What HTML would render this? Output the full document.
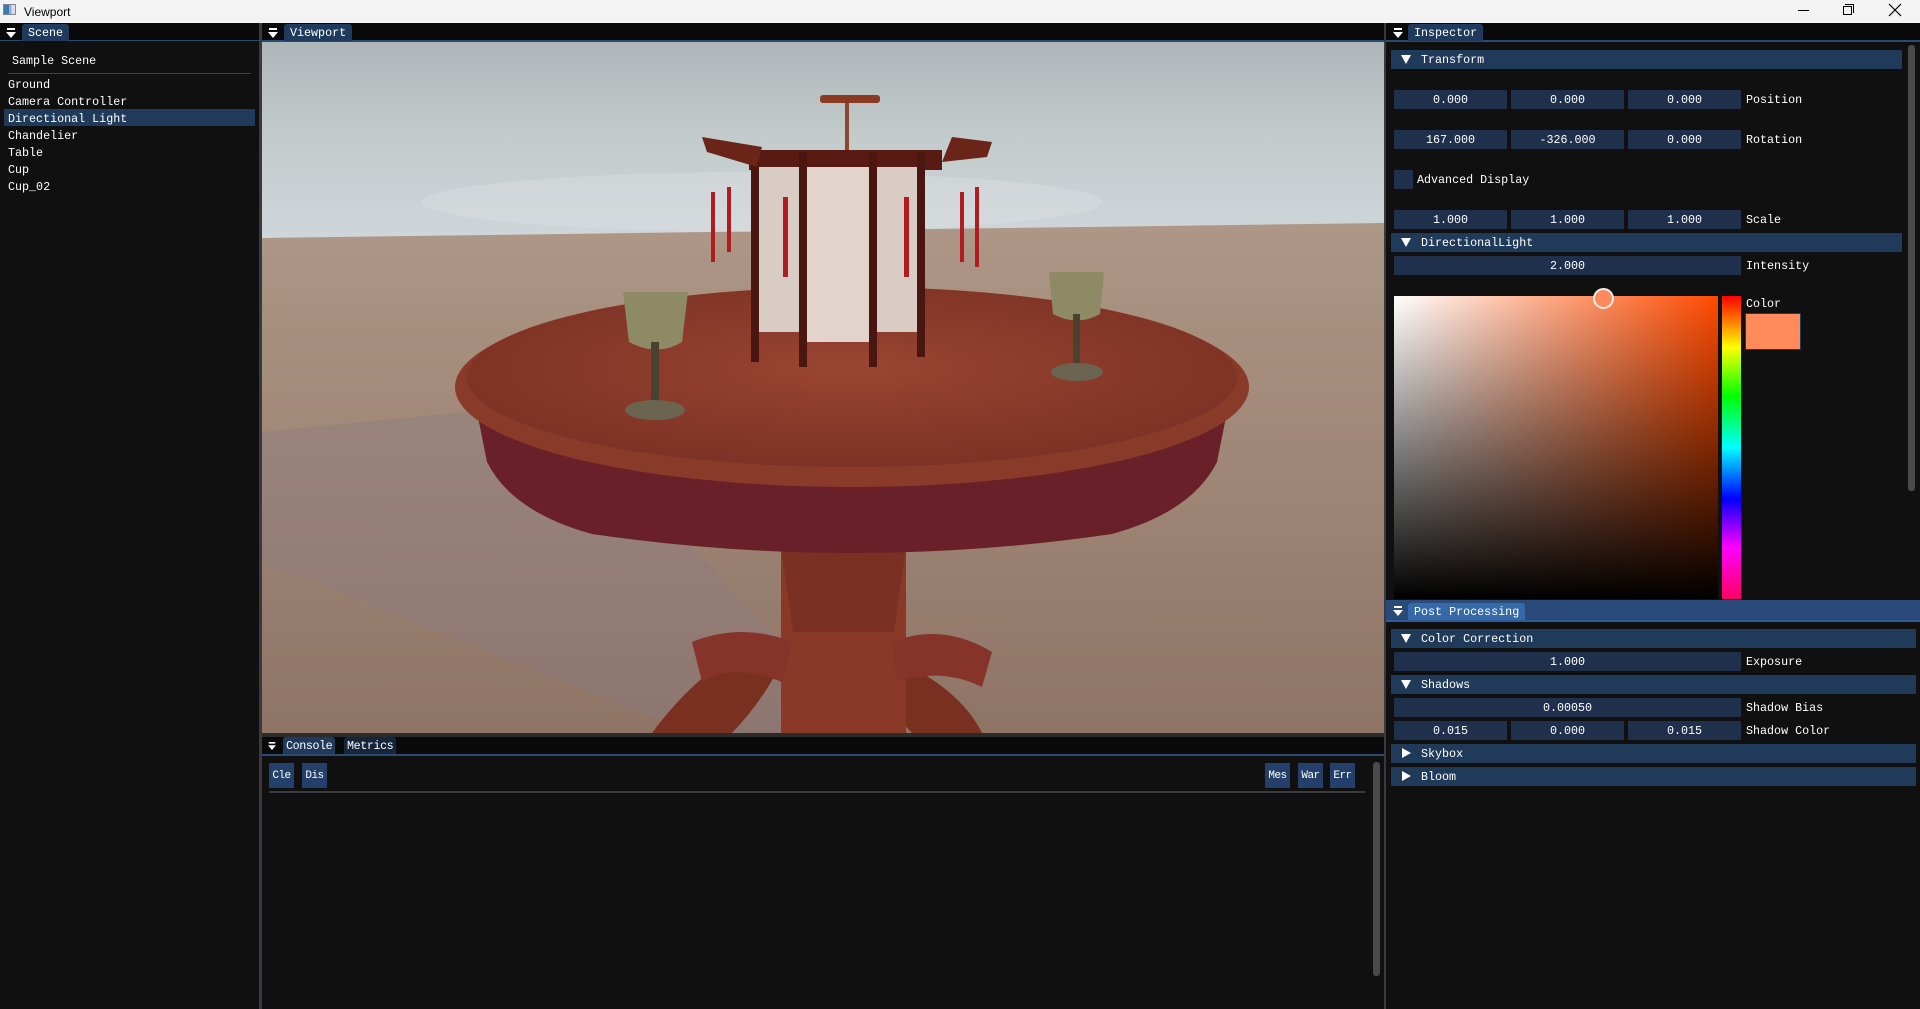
<!DOCTYPE html>
<html><head><meta charset="utf-8"><style>
*{margin:0;padding:0;box-sizing:border-box}
body{width:1920px;height:1009px;overflow:hidden;background:#101010;font-family:"Liberation Mono","DejaVu Sans Mono",monospace;font-size:11.7px;color:#fff;position:relative}
.a{position:absolute}
.t{position:absolute;white-space:pre;line-height:14px}
.tb{background:#0a0a0a}
.tab{position:absolute;background:#1f3a5c;border-radius:3px 3px 0 0;height:17px;line-height:18px;padding:0 6px;color:#fff}
.f{position:absolute;background:#1e304c;height:19px;line-height:21px;text-align:center}
.h{position:absolute;background:#203a5a;height:19px;line-height:21px;padding-left:30px}
.tri{position:absolute;left:10px;top:5px;width:0;height:0;border-left:5px solid transparent;border-right:5px solid transparent;border-top:9px solid #fff}
.trr{position:absolute;left:11px;top:4px;width:0;height:0;border-top:5px solid transparent;border-bottom:5px solid transparent;border-left:9px solid #fff}
.lab{position:absolute;line-height:21px}
.btn{position:absolute;background:#24406a;height:25px;width:25px;line-height:26px;text-align:center;overflow:hidden;font-size:11px;letter-spacing:-0.5px}
.menu{position:absolute;width:10px;height:12px}
.menu:before{content:"";position:absolute;left:1px;top:1px;width:8px;height:2px;background:#fff}
.menu:after{content:"";position:absolute;left:0;top:5px;border-left:5px solid transparent;border-right:5px solid transparent;border-top:6px solid #fff}
</style></head><body>
<div class="a" style="left:0;top:0;width:1920px;height:23px;background:#f3f3f3"></div>
<div class="a" style="left:3px;top:4px;width:13px;height:11px;border:1px solid #7a8a9a;background:linear-gradient(90deg,#3a7ab0 0 45%,#9ac 45% 70%,#dde 70%)"></div>
<div class="t" style="left:24px;top:5px;color:#000;font-family:'Liberation Sans',sans-serif;font-size:12px">Viewport</div>
<div class="a" style="left:1798px;top:10px;width:11px;height:1px;background:#000"></div>
<div class="a" style="left:1843px;top:6px;width:9px;height:9px;border:1px solid #000"></div>
<div class="a" style="left:1845px;top:4px;width:9px;height:9px;border-top:1px solid #000;border-right:1px solid #000"></div>
<svg class="a" style="left:1888px;top:3px" width="14" height="14"><path d="M1 1L13 13M13 1L1 13" stroke="#000" stroke-width="1.2"/></svg>

<div class="a tb" style="left:0;top:23px;width:259px;height:17px"></div>
<div class="a" style="left:0;top:40px;width:259px;height:1px;background:#2a4a70"></div>
<div class="menu" style="left:6px;top:27px"></div>
<div class="tab" style="left:22px;top:24px">Scene</div>
<div class="t" style="left:12px;top:54px">Sample Scene</div>
<div class="a" style="left:8px;top:73px;width:243px;height:1px;background:#444"></div>
<div class="a" style="left:4px;top:109px;width:251px;height:17px;background:#203a5a"></div>
<div class="t" style="left:8px;top:78px">Ground</div>
<div class="t" style="left:8px;top:95px">Camera Controller</div>
<div class="t" style="left:8px;top:112px">Directional Light</div>
<div class="t" style="left:8px;top:129px">Chandelier</div>
<div class="t" style="left:8px;top:146px">Table</div>
<div class="t" style="left:8px;top:163px">Cup</div>
<div class="t" style="left:8px;top:180px">Cup_02</div>
<div class="a" style="left:259px;top:23px;width:3px;height:986px;background:#3a3940"></div>

<div class="a tb" style="left:262px;top:23px;width:1122px;height:17px"></div>
<div class="a" style="left:262px;top:40px;width:1122px;height:2px;background:#2a4a70"></div>
<div class="menu" style="left:268px;top:27px"></div>
<div class="tab" style="left:284px;top:24px">Viewport</div>
<svg class="a" style="left:262px;top:42px" width="1122" height="691" viewBox="0 0 1122 691">
<defs>
<linearGradient id="sky" x1="0" y1="0" x2="0" y2="1"><stop offset="0" stop-color="#aeb6b9"/><stop offset=".5" stop-color="#c4cbcc"/><stop offset="1" stop-color="#cfd6da"/></linearGradient>
<linearGradient id="gr" x1="0" y1="0" x2="0" y2="1"><stop offset="0" stop-color="#b9a596"/><stop offset=".4" stop-color="#a8907f"/><stop offset="1" stop-color="#8f7466"/></linearGradient>
<radialGradient id="top" cx=".5" cy=".45" r=".6"><stop offset="0" stop-color="#9a4530"/><stop offset="1" stop-color="#7a3024"/></radialGradient>
</defs>
<rect width="1122" height="691" fill="url(#gr)"/>
<path d="M0 0H1122V181L0 196Z" fill="url(#sky)"/>
<path d="M0 390L300 360 600 691H430L0 520Z" fill="#8a7a80" opacity=".35"/>
<ellipse cx="500" cy="160" rx="340" ry="30" fill="#dfe3e5" opacity=".35"/>
<path d="M460 620Q420 650 390 691H470Q500 660 520 620Z" fill="#7a3020"/>
<path d="M640 620Q700 650 720 691H650Q620 660 600 620Z" fill="#7a3020"/>
<rect x="519" y="505" width="125" height="186" fill="#8a3828"/>
<path d="M519 505H644L632 590H531Z" fill="#7a3022"/>
<path d="M430 600Q480 580 530 600L520 640Q470 620 440 640Z" fill="#86332a"/>
<path d="M630 600Q680 580 730 610L720 645Q680 625 635 640Z" fill="#86332a"/>
<path d="M210 345L225 420Q250 470 330 492Q590 530 850 492Q930 470 955 420L970 345Z" fill="#6a2028"/>
<ellipse cx="590" cy="345" rx="397" ry="100" fill="#8a3a28"/>
<ellipse cx="590" cy="335" rx="385" ry="90" fill="url(#top)"/>
<rect x="583" y="56" width="4" height="52" fill="#8a4a2a"/>
<rect x="558" y="53" width="60" height="8" rx="3" fill="#8a3a22"/>
<rect x="487" y="108" width="193" height="20" fill="#5a1a14"/>
<rect x="497" y="125" width="40" height="165" fill="#d8ccc4"/>
<rect x="545" y="125" width="62" height="175" fill="#e2d4cc"/>
<rect x="615" y="125" width="40" height="165" fill="#d8ccc4"/>
<rect x="489" y="110" width="8" height="210" fill="#4a1612"/>
<rect x="537" y="110" width="8" height="215" fill="#4a1612"/>
<rect x="607" y="110" width="8" height="215" fill="#4a1612"/>
<rect x="655" y="110" width="8" height="205" fill="#4a1612"/>
<path d="M440 95L500 105 495 125 445 110ZM690 95L730 100 725 115 680 120Z" fill="#6a2418"/>
<rect x="449" y="150" width="4" height="70" fill="#b01c20"/><rect x="465" y="145" width="4" height="65" fill="#b01c20"/>
<rect x="521" y="155" width="5" height="80" fill="#b01c20"/><rect x="642" y="155" width="5" height="80" fill="#b01c20"/>
<rect x="698" y="150" width="4" height="70" fill="#b01c20"/><rect x="713" y="145" width="4" height="80" fill="#b01c20"/>
<path d="M361 250H426L420 300Q395 315 367 300Z" fill="#8e8a66"/>
<rect x="389" y="300" width="8" height="60" fill="#4a4230"/>
<ellipse cx="393" cy="368" rx="30" ry="10" fill="#6a6450"/>
<path d="M787 230H842L838 272Q815 285 791 272Z" fill="#8e8a66"/>
<rect x="811" y="272" width="7" height="52" fill="#4a4230"/>
<ellipse cx="815" cy="330" rx="26" ry="9" fill="#6a6450"/>
</svg>
<div class="a" style="left:1384px;top:23px;width:2px;height:986px;background:#3a3940"></div>

<div class="a" style="left:262px;top:733px;width:1122px;height:4px;background:#2b2b2b"></div>
<div class="a tb" style="left:262px;top:737px;width:1122px;height:17px"></div>
<div class="a" style="left:262px;top:754px;width:1122px;height:2px;background:#2a4a70"></div>
<div class="menu" style="left:267px;top:740px;transform:scale(.8)"></div>
<div class="tab" style="left:283px;top:737px;padding:0 3px;letter-spacing:-0.4px">Console</div>
<div class="tab" style="left:344px;top:737px;padding:0 3px;background:#16263a;letter-spacing:-0.4px">Metrics</div>
<div class="btn" style="left:269px;top:763px">Cle</div>
<div class="btn" style="left:302px;top:763px">Dis</div>
<div class="btn" style="left:1265px;top:763px">Mes</div>
<div class="btn" style="left:1298px;top:763px">War</div>
<div class="btn" style="left:1330px;top:763px">Err</div>
<div class="a" style="left:269px;top:791px;width:1096px;height:2px;background:#3a3a3e"></div>
<div class="a" style="left:1373px;top:762px;width:7px;height:214px;background:#4a4a4a;border-radius:3px"></div>

<div class="a tb" style="left:1386px;top:23px;width:534px;height:17px"></div>
<div class="a" style="left:1386px;top:40px;width:534px;height:2px;background:#2a4a70"></div>
<div class="menu" style="left:1393px;top:27px"></div>
<div class="tab" style="left:1408px;top:24px">Inspector</div>
<div class="a" style="left:1908px;top:45px;width:7px;height:446px;background:#4a4a4a;border-radius:3px"></div>

<div class="h" style="left:1391px;top:50px;width:511px"><span class="tri"></span>Transform</div>
<div class="f" style="left:1394px;top:90px;width:113px">0.000</div>
<div class="f" style="left:1511px;top:90px;width:113px">0.000</div>
<div class="f" style="left:1628px;top:90px;width:113px">0.000</div>
<div class="lab" style="left:1746px;top:90px">Position</div>
<div class="f" style="left:1394px;top:130px;width:113px">167.000</div>
<div class="f" style="left:1511px;top:130px;width:113px">-326.000</div>
<div class="f" style="left:1628px;top:130px;width:113px">0.000</div>
<div class="lab" style="left:1746px;top:130px">Rotation</div>
<div class="f" style="left:1394px;top:170px;width:19px"></div>
<div class="lab" style="left:1417px;top:170px">Advanced Display</div>
<div class="f" style="left:1394px;top:210px;width:113px">1.000</div>
<div class="f" style="left:1511px;top:210px;width:113px">1.000</div>
<div class="f" style="left:1628px;top:210px;width:113px">1.000</div>
<div class="lab" style="left:1746px;top:210px">Scale</div>
<div class="h" style="left:1391px;top:233px;width:511px"><span class="tri"></span>DirectionalLight</div>
<div class="f" style="left:1394px;top:256px;width:347px">2.000</div>
<div class="lab" style="left:1746px;top:256px">Intensity</div>
<div class="a" style="left:1394px;top:296px;width:324px;height:303px;background:linear-gradient(to top,#000,rgba(0,0,0,0)),linear-gradient(to right,#fff,#ff4a00)"></div>
<div class="a" style="left:1722px;top:296px;width:19px;height:303px;background:linear-gradient(#f00,#ff0 17%,#0f0 33%,#0ff 50%,#00f 67%,#f0f 83%,#ff0060)"></div>
<div class="a" style="left:1593px;top:288px;width:21px;height:21px;border-radius:50%;background:#ff8a5c;border:2px solid #eee"></div>
<div class="t" style="left:1746px;top:297px">Color</div>
<div class="a" style="left:1745px;top:313px;width:56px;height:37px;background:#ff8a5c;border:1px solid #203a5a"></div>

<div class="a" style="left:1386px;top:600px;width:534px;height:20px;background:#2a4a7a"></div>
<div class="a" style="left:1386px;top:620px;width:534px;height:2px;background:#2e5a9a"></div>
<div class="menu" style="left:1393px;top:605px"></div>
<div class="tab" style="left:1408px;top:603px;background:#3569a8">Post Processing</div>
<div class="h" style="left:1391px;top:629px;width:525px"><span class="tri"></span>Color Correction</div>
<div class="f" style="left:1394px;top:652px;width:347px">1.000</div>
<div class="lab" style="left:1746px;top:652px">Exposure</div>
<div class="h" style="left:1391px;top:675px;width:525px"><span class="tri"></span>Shadows</div>
<div class="f" style="left:1394px;top:698px;width:347px">0.00050</div>
<div class="lab" style="left:1746px;top:698px">Shadow Bias</div>
<div class="f" style="left:1394px;top:721px;width:113px">0.015</div>
<div class="f" style="left:1511px;top:721px;width:113px">0.000</div>
<div class="f" style="left:1628px;top:721px;width:113px">0.015</div>
<div class="lab" style="left:1746px;top:721px">Shadow Color</div>
<div class="h" style="left:1391px;top:744px;width:525px"><span class="trr"></span>Skybox</div>
<div class="h" style="left:1391px;top:767px;width:525px"><span class="trr"></span>Bloom</div>
</body></html>
